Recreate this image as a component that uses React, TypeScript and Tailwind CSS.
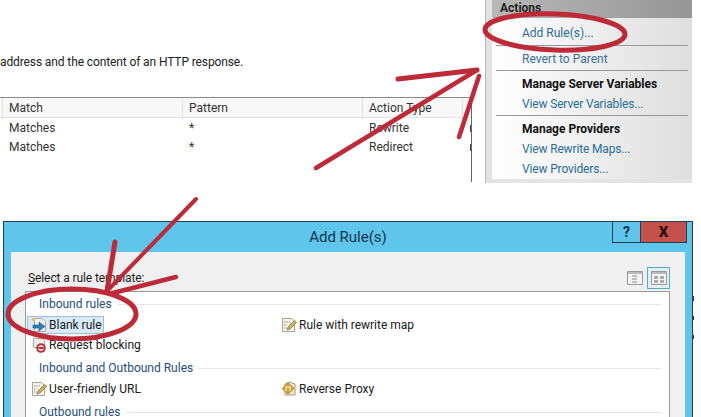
const font = "font-['Roboto',sans-serif]";

function RuleIcon({ kind }: { kind: string }) {
  if (kind === 'blank') {
    return (
      <svg width="16" height="16" viewBox="0 0 16 16" className="shrink-0">
        <path d="M3.5 1.5h8l3 3v10h-11z" fill="#f2f2ee" stroke="#a9a9a4" />
        <path d="M2 0l.8 1.6L4.4 2.4l-1.6.8L2 4.8l-.8-1.6L0 2.4l1.2-.8z" fill="#e4c45a" />
        <path d="M2 8h6V5l6 4.5L8 14v-3H2z" fill="#2f7fb5" stroke="#1d5a86" strokeWidth="0.6" />
      </svg>
    );
  }
  if (kind === 'block') {
    return (
      <svg width="16" height="16" viewBox="0 0 16 16" className="shrink-0">
        <path d="M2.5 1.5h9l2 2v7h-11z" fill="#efefec" stroke="#a9a9a4" />
        <circle cx="10" cy="11" r="3.8" fill="#fff" stroke="#b53038" strokeWidth="2" />
        <path d="M7.5 11h5" stroke="#b53038" strokeWidth="2" />
      </svg>
    );
  }
  if (kind === 'proxy') {
    return (
      <svg width="16" height="16" viewBox="0 0 16 16" className="shrink-0">
        <path d="M4 3l4-2 6 2v11H4z" fill="#f0e6c8" stroke="#a89a72" />
        <path d="M1 7.5l6-5.5 6 5.5-6 5.5z" fill="#d8a030" stroke="#96702a" strokeWidth="0.7" />
        <path d="M5 10V6h4v4" fill="none" stroke="#fff3d0" strokeWidth="1.2" />
      </svg>
    );
  }
  return (
    <svg width="16" height="16" viewBox="0 0 16 16" className="shrink-0">
      <path d="M1.5 1.5h9l3 2.5v10.5h-12z" fill="#f6f3ea" stroke="#aaa594" />
      <path d="M3 5h6M3 8h3M3 11h3" stroke="#8a8a80" strokeDasharray="1.5 1" />
      <path d="M6 13l1-3 6.5-6.5 2 2L9 12z" fill="#cdb25a" stroke="#6f6a4a" strokeWidth="0.7" />
    </svg>
  );
}

function SectionLabel({ text }: { text: string }) {
  return (
    <div className="flex items-center gap-[5px] h-[20px] pl-[13px] pr-[8px]">
      <span className="text-[12px] text-[#1f4e79] whitespace-nowrap">{text}</span>
      <div className="h-px flex-1 bg-[#e6e6e6]" />
    </div>
  );
}

function Rule({ icon, label, selected }: { icon: string; label: string; selected?: boolean }) {
  return (
    <div
      className={`flex items-center gap-[2px] h-[18px] pl-[3px] w-fit pr-[1px] border text-[12px] text-[#1a1a1a] whitespace-nowrap ${
        selected ? 'bg-[#d9e9f7] border-[#9cc0dc]' : 'border-transparent'
      }`}
    >
      <RuleIcon kind={icon} />
      <span>{label}</span>
    </div>
  );
}

function PanelLink({ text }: { text: string }) {
  return <div className="h-[20px] pl-[30px] text-[12px] leading-[20px] tracking-[-0.15px] text-[#2a6e96]">{text}</div>;
}

function PanelHead({ text }: { text: string }) {
  return <div className="h-[20px] pl-[30px] text-[12px] leading-[20px] font-bold text-[#111]">{text}</div>;
}

function TableRow({ cells, head }: { cells: string[]; head?: boolean }) {
  const border = head ? 'border-r border-[#ddd]' : '';
  return (
    <div
      className={`grid grid-cols-[3px_180px_180px_100px_1fr] ${
        head ? 'h-[20px] leading-[21px] bg-[#f8f8f8] border-b border-[#e4e4e4]' : 'h-[19px] leading-[20px]'
      }`}
    >
      <div className={border} />
      {cells.map((c, i) => (
        <div key={i} className={`${border} pl-[6px]`}>
          {c}
        </div>
      ))}
      {/* clipped first letter of the next column */}
      <div className="flex items-center justify-end">
        {!head && <div className="w-px h-[7px] bg-[#444]" />}
      </div>
    </div>
  );
}

export default function App() {
  return (
    <div className={`relative w-[701px] h-[417px] overflow-hidden bg-white flex flex-col ${font}`}>
      {/* top screenshot */}
      <div className="flex h-[221px] shrink-0">
        <div className="w-[472px] shrink-0 flex flex-col">
          <p className="mt-[53px] text-[12px] leading-[18px] tracking-[-0.11px] text-[#222] whitespace-nowrap">
            address and the content of an HTTP response.
          </p>
          <div className="mt-[26px] w-[472px] h-[85px] border-t border-t-[#8a8a8a] border-r border-r-[#666] text-[12px] text-[#333]">
            <TableRow head cells={['Match', 'Pattern', 'Action Type']} />
            <TableRow cells={['Matches', '*', 'Rewrite']} />
            <TableRow cells={['Matches', '*', 'Redirect']} />
          </div>
        </div>
        <div className="w-[13px] h-[183px] bg-white" />
        <div className="w-[7px] h-[183px] bg-[#e2e2e2] border-l border-[#b5b5b5]" />
        <div className="w-[200px] h-[183px] flex flex-col bg-gradient-to-r from-[#ffffff] to-[#dedede]">
          <div className="h-[18px] bg-gradient-to-r from-[#b8b8b8] to-[#969696] pl-[8px] text-[12px] leading-[16px] font-bold text-[#222]">
            Actions
          </div>
          <div className="h-[27px] pt-[5px] pl-[30px] text-[12px] leading-[20px] text-[#2a6e96]">
            Add Rule(s)...
          </div>
          <div className="mx-[4px] h-px bg-[#999]" />
          <div className="h-[24px] pl-[30px] text-[12px] leading-[26px] text-[#3a6e96]">Revert to Parent</div>
          <div className="mx-[4px] h-px bg-[#999]" />
          <div className="pt-[3px]">
            <PanelHead text="Manage Server Variables" />
            <PanelLink text="View Server Variables..." />
          </div>
          <div className="mx-[4px] h-px bg-[#999] mt-px" />
          <div className="pt-[3px]">
            <PanelHead text="Manage Providers" />
            <PanelLink text="View Rewrite Maps..." />
            <PanelLink text="View Providers..." />
          </div>
          <div className="flex-1 bg-[#e4e4e4]" />
        </div>
      </div>

      <div className="flex h-[196px]">
        {/* Add Rule(s) dialog */}
        <div className="w-[690px] ml-[3px] border-l border-t border-r border-[#1f3f55] bg-[#5fc5ea] flex flex-col">
          <div className="relative h-[30px] shrink-0 flex items-center justify-center text-[15px] text-[#12354d]">
            Add Rule(s)
            <div className="absolute top-0 right-[5px] flex h-[21px] border-b border-x border-[#1f3f55]">
              <div className="w-[28px] flex items-center justify-center font-bold text-[14px] text-[#12354d] border-r border-[#1f3f55]">?</div>
              <div className="w-[45px] flex items-center justify-center bg-[#c4524a] font-black text-[15px] text-[#2a1010]">X</div>
            </div>
          </div>
          <div className="ml-[7px] mr-[7px] flex-1 bg-[#f0f0f0] flex flex-col">
            <div className="flex items-center justify-between h-[39px] pt-[13px] pl-[17px] pr-[15px]">
              <span className="-mt-px text-[12px] leading-[18px] tracking-[-0.1px] text-[#1a1a1a]">
                <span className="underline">S</span>elect a rule template:
              </span>
              <div className="flex items-center gap-[4px]">
                <svg width="16" height="16" viewBox="0 0 16 16">
                  <path d="M0.5 1.5h15v13h-15z" fill="#f4f4f4" stroke="#999" />
                  <path d="M1 2h14v2H1z" fill="#bbb" />
                  <path d="M5 6h5M5 9h5M5 12h5" stroke="#888" />
                </svg>
                <div className="w-[23px] h-[22px] border border-[#5aa9c4] bg-[#dff0f7] flex items-center justify-center">
                  <svg width="16" height="16" viewBox="0 0 16 16">
                    <path d="M0.5 1.5h15v13h-15z" fill="#f4f4f4" stroke="#999" />
                    <path d="M1 2h14v2H1z" fill="#bbb" />
                    <path d="M3 6h4v3H3zM9 6h4v3H9zM3 10h4v3H3zM9 10h4v3H9z" fill="#aaa" />
                  </svg>
                </div>
              </div>
            </div>
            <div className="ml-[14px] mr-[15px] flex-1 bg-white border-t border-x border-[#9a9a9a] pt-[2px] flex flex-col">
              <SectionLabel text="Inbound rules" />
              <div className="grid grid-cols-[250px_1fr] pl-[1px] pt-[2px] h-[44px]">
                <div className="flex flex-col gap-[2px]">
                  <Rule icon="blank" label="Blank rule" selected />
                  <Rule icon="block" label="Request blocking" />
                </div>
                <div>
                  <Rule icon="map" label="Rule with rewrite map" />
                </div>
              </div>
              <SectionLabel text="Inbound and Outbound Rules" />
              <div className="grid grid-cols-[250px_1fr] pl-[1px] pt-[2px] h-[24px]">
                <Rule icon="map" label="User-friendly URL" />
                <Rule icon="proxy" label="Reverse Proxy" />
              </div>
              <SectionLabel text="Outbound rules" />
            </div>
          </div>
        </div>
        {/* bits of the page behind the dialog */}
        <div className="w-[2px] flex flex-col pt-[75px] gap-[15px]">
          <div className="w-px h-[5px] bg-[#333]" />
          <div className="w-px h-[4px] bg-[#333]" />
          <div className="w-px h-[4px] bg-[#333]" />
        </div>
      </div>

      {/* red annotations drawn over the screenshots */}
      <svg className="absolute inset-0 pointer-events-none" width="701" height="417" viewBox="0 0 701 417" fill="none" stroke="#bd2a38" strokeLinecap="round">
        <path d="M316 168L477 70" strokeWidth="4.5" />
        <path d="M398 79L477 70" strokeWidth="5" />
        <path d="M459 137L479 76" strokeWidth="4.5" />
        <ellipse cx="555" cy="32" rx="70" ry="18" strokeWidth="5" transform="rotate(2 555 32)" />
        <path d="M196 199L107 291" strokeWidth="4" />
        <path d="M115 242L107 291" strokeWidth="5" />
        <path d="M176 277L109 294" strokeWidth="4.5" />
        <ellipse cx="72" cy="314" rx="64" ry="25" strokeWidth="5" />
      </svg>
    </div>
  );
}
